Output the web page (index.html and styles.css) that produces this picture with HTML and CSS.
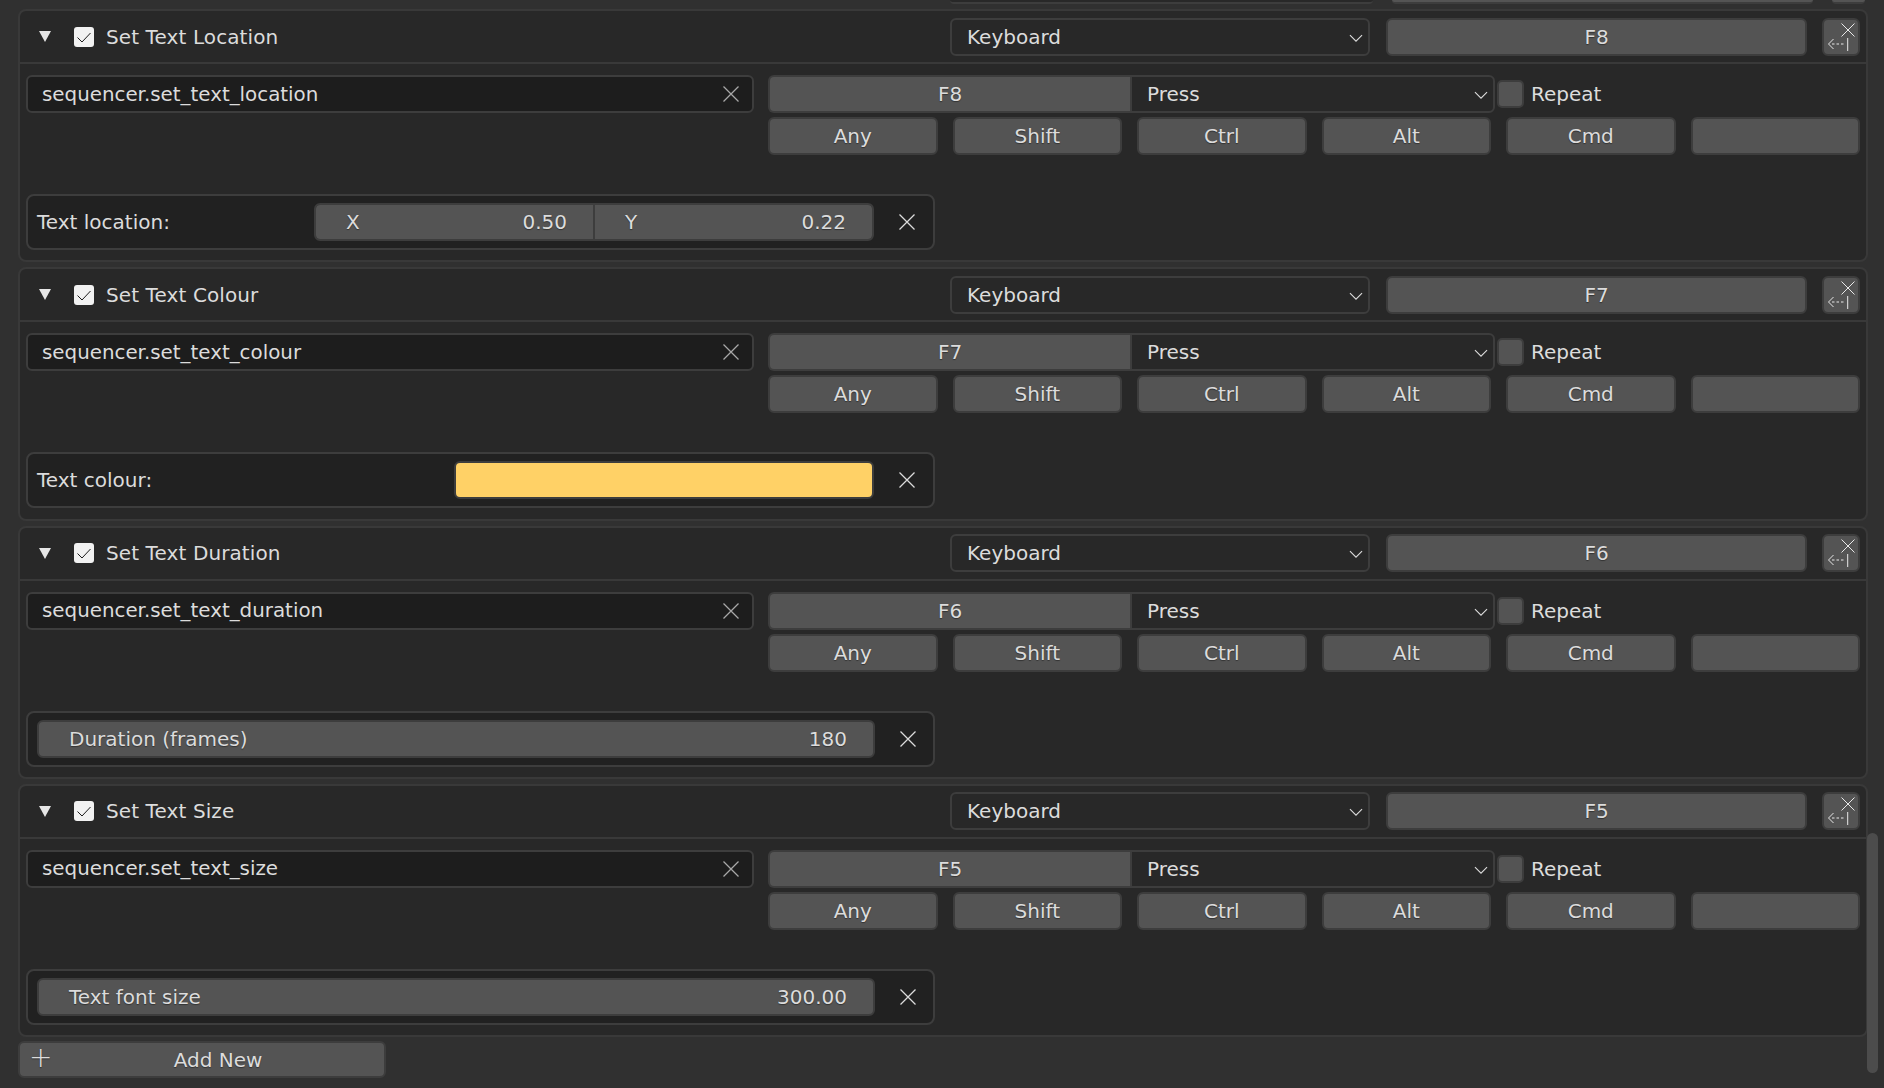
FILE: index.html
```html
<!DOCTYPE html>
<html>

<head lang="en">
    <meta charset="UTF-8">
    <title>Keymap</title>
    <link rel="stylesheet" href="styles.css">
</head>

<body>
    <svg class="icon-defs">
        <symbol id="x" viewBox="0 0 16 16"><path d="M2 2l12 12M14 2L2 14" /></symbol>
        <symbol id="chev" viewBox="0 0 14 10"><path d="M1.500 2l5.500 5.500L12.500 2" /></symbol>
        <symbol id="tick" viewBox="0 0 20 20"><path d="M3.500 10.500l4.500 4.500 8.500-9" /></symbol>
        <symbol id="restore" viewBox="0 0 38 38">
            <path class="dim" d="M11.500 21l-5 5 5 5M10 26h2.500M14.500 26h2.500M19 26h2.500M25.700 20v13" />
            <path class="bright" d="M19.500 5.500l13 13M32.500 5.500l-13 13" />
        </symbol>
    </svg>

    <div class="page">
        <div class="cut-row">
            <div class="cut cut-a"></div>
            <div class="cut cut-b"></div>
            <div class="cut cut-c"></div>
        </div>

        <section class="panel">
            <div class="panel-head">
                <span class="arrow"></span>
                <span class="check"><svg><use href="#tick" /></svg></span>
                <span class="title">Set Text Location</span>
                <div class="select head-select">Keyboard<svg class="chev"><use href="#chev" /></svg></div>
                <div class="btn head-key">F8</div>
                <div class="btn restore"><svg><use href="#restore" /></svg></div>
            </div>
            <div class="panel-body">
                <div class="body-top">
                    <div class="name-field">sequencer.set_text_location<svg class="x x-dim"><use href="#x" /></svg></div>
                    <div class="right">
                        <div class="key-row">
                            <div class="btn key-btn">F8</div>
                            <div class="select press">Press<svg class="chev"><use href="#chev" /></svg></div>
                            <span class="repeat-box"></span>
                            <span class="repeat">Repeat</span>
                        </div>
                        <div class="mods">
                            <div class="btn">Any</div>
                            <div class="btn">Shift</div>
                            <div class="btn">Ctrl</div>
                            <div class="btn">Alt</div>
                            <div class="btn">Cmd</div>
                            <div class="btn"></div>
                        </div>
                    </div>
                </div>
                <div class="params">
                    <span class="param-label">Text location:</span>
                    <div class="vector">
                        <div class="num"><span>X</span><span>0.50</span></div>
                        <div class="num"><span>Y</span><span>0.22</span></div>
                    </div>
                    <svg class="x"><use href="#x" /></svg>
                </div>
            </div>
        </section>

        <section class="panel">
            <div class="panel-head">
                <span class="arrow"></span>
                <span class="check"><svg><use href="#tick" /></svg></span>
                <span class="title">Set Text Colour</span>
                <div class="select head-select">Keyboard<svg class="chev"><use href="#chev" /></svg></div>
                <div class="btn head-key">F7</div>
                <div class="btn restore"><svg><use href="#restore" /></svg></div>
            </div>
            <div class="panel-body">
                <div class="body-top">
                    <div class="name-field">sequencer.set_text_colour<svg class="x x-dim"><use href="#x" /></svg></div>
                    <div class="right">
                        <div class="key-row">
                            <div class="btn key-btn">F7</div>
                            <div class="select press">Press<svg class="chev"><use href="#chev" /></svg></div>
                            <span class="repeat-box"></span>
                            <span class="repeat">Repeat</span>
                        </div>
                        <div class="mods">
                            <div class="btn">Any</div>
                            <div class="btn">Shift</div>
                            <div class="btn">Ctrl</div>
                            <div class="btn">Alt</div>
                            <div class="btn">Cmd</div>
                            <div class="btn"></div>
                        </div>
                    </div>
                </div>
                <div class="params">
                    <span class="param-label">Text colour:</span>
                    <div class="swatch"></div>
                    <svg class="x"><use href="#x" /></svg>
                </div>
            </div>
        </section>

        <section class="panel">
            <div class="panel-head">
                <span class="arrow"></span>
                <span class="check"><svg><use href="#tick" /></svg></span>
                <span class="title">Set Text Duration</span>
                <div class="select head-select">Keyboard<svg class="chev"><use href="#chev" /></svg></div>
                <div class="btn head-key">F6</div>
                <div class="btn restore"><svg><use href="#restore" /></svg></div>
            </div>
            <div class="panel-body">
                <div class="body-top">
                    <div class="name-field">sequencer.set_text_duration<svg class="x x-dim"><use href="#x" /></svg></div>
                    <div class="right">
                        <div class="key-row">
                            <div class="btn key-btn">F6</div>
                            <div class="select press">Press<svg class="chev"><use href="#chev" /></svg></div>
                            <span class="repeat-box"></span>
                            <span class="repeat">Repeat</span>
                        </div>
                        <div class="mods">
                            <div class="btn">Any</div>
                            <div class="btn">Shift</div>
                            <div class="btn">Ctrl</div>
                            <div class="btn">Alt</div>
                            <div class="btn">Cmd</div>
                            <div class="btn"></div>
                        </div>
                    </div>
                </div>
                <div class="params">
                    <div class="num wide"><span>Duration (frames)</span><span>180</span></div>
                    <svg class="x"><use href="#x" /></svg>
                </div>
            </div>
        </section>

        <section class="panel">
            <div class="panel-head">
                <span class="arrow"></span>
                <span class="check"><svg><use href="#tick" /></svg></span>
                <span class="title">Set Text Size</span>
                <div class="select head-select">Keyboard<svg class="chev"><use href="#chev" /></svg></div>
                <div class="btn head-key">F5</div>
                <div class="btn restore"><svg><use href="#restore" /></svg></div>
            </div>
            <div class="panel-body">
                <div class="body-top">
                    <div class="name-field">sequencer.set_text_size<svg class="x x-dim"><use href="#x" /></svg></div>
                    <div class="right">
                        <div class="key-row">
                            <div class="btn key-btn">F5</div>
                            <div class="select press">Press<svg class="chev"><use href="#chev" /></svg></div>
                            <span class="repeat-box"></span>
                            <span class="repeat">Repeat</span>
                        </div>
                        <div class="mods">
                            <div class="btn">Any</div>
                            <div class="btn">Shift</div>
                            <div class="btn">Ctrl</div>
                            <div class="btn">Alt</div>
                            <div class="btn">Cmd</div>
                            <div class="btn"></div>
                        </div>
                    </div>
                </div>
                <div class="params">
                    <div class="num wide"><span>Text font size</span><span>300.00</span></div>
                    <svg class="x"><use href="#x" /></svg>
                </div>
            </div>
        </section>

        <div class="btn add-new"><span class="plus">+</span>Add New</div>
    </div>

    <div class="scrollbar"></div>
</body>

</html>
```

FILE: styles.css
```css
* {
    box-sizing: border-box;
}

html,
body {
    margin: 0;
    height: 1088px;
    overflow: hidden;
}

body {
    background-color: #303030;
    color: #dcdcdc;
    font-family: "DejaVu Sans", sans-serif;
    font-size: 20px;
    position: relative;
}

.icon-defs {
    display: none;
}

.page {
    width: 1868px;
    padding-left: 18px;
}

svg path {
    fill: none;
    stroke: currentColor;
}

/* the bottom edge of the row scrolled off above */
.cut-row {
    height: 9px;
    display: flex;
}

.cut {
    height: 4px;
    background-color: #545454;
    border-bottom: 2px solid #3d3d3d;
    border-radius: 0 0 6px 6px;
}

.cut-a {
    margin-left: 932px;
    width: 423px;
    background-color: #282828;
}

.cut-b {
    margin-left: 19px;
    width: 421px;
}

.cut-c {
    margin-left: 19px;
    width: 33px;
}

.panel {
    height: 253.300px;
    margin-bottom: 5px;
    background-color: #282828;
    border: 2px solid #393939;
    border-radius: 8px;
    display: flex;
    flex-direction: column;
}

.panel:last-of-type {
    margin-bottom: 4px;
}

.panel-head {
    height: 53px;
    flex: none;
    display: flex;
    align-items: center;
    border-bottom: 2px solid #393939;
    padding-left: 19px;
}

.arrow {
    width: 0;
    height: 0;
    border-left: 6px solid transparent;
    border-right: 6px solid transparent;
    border-top: 11px solid #e6e6e6;
    margin-right: 23px;
}

.check {
    width: 20px;
    height: 20px;
    background-color: #f2f2f2;
    border-radius: 3px;
    color: #1c1c1c;
    margin-right: 12px;
}

.check svg {
    display: block;
    width: 20px;
    height: 20px;
}

.check path {
    stroke-width: 4;
}

.title {
    width: 844px;
    letter-spacing: 0.100px;
}

.select {
    height: 38px;
    display: flex;
    align-items: center;
    justify-content: space-between;
    padding: 0 4px 0 15px;
    background-color: #282828;
    border: 2px solid #3d3d3d;
    border-radius: 6px;
}

.chev {
    width: 16px;
    height: 11px;
    margin-top: 3px;
}

.chev path {
    stroke-width: 2.400;
}

.btn {
    height: 38px;
    display: flex;
    align-items: center;
    justify-content: center;
    background-color: #545454;
    border: 2px solid #3d3d3d;
    border-radius: 6px;
    text-shadow: 0 1px 1px rgba(0, 0, 0, 0.4);
}

.head-select {
    width: 420px;
}

.head-key {
    width: 421px;
    margin-left: 16px;
}

.restore {
    width: 38px;
    margin-left: 15px;
    color: #e8e8e8;
}

.restore svg {
    width: 38px;
    height: 38px;
    flex: none;
}

.restore path {
    stroke-width: 2.200;
}

.restore .dim {
    stroke: #b8b8b8;
}

.panel-body {
    flex: 1;
    padding: 11px 6px 0 6px;
}

.body-top {
    display: flex;
    justify-content: space-between;
}

.name-field {
    width: 728px;
    height: 38px;
    display: flex;
    align-items: center;
    justify-content: space-between;
    padding: 0 11px 0 14px;
    font-size: 19.850px;
    background-color: #1d1d1d;
    border: 2px solid #3d3d3d;
    border-radius: 6px;
}

.x {
    width: 20px;
    height: 20px;
    flex: none;
}

.x path {
    stroke-width: 1.800;
}

.x-dim {
    color: #a8a8a8;
}

.params {
    width: 909px;
    margin-top: 39px;
    height: 56px;
    display: flex;
    align-items: center;
    padding: 0 16px 0 9px;
    background-color: #212121;
    border: 2px solid #3d3d3d;
    border-radius: 8px;
}

.param-label {
    flex: 1;
}

.vector {
    width: 560px;
    height: 38px;
    margin-right: 23px;
    display: flex;
    border: 2px solid #3d3d3d;
    border-radius: 6px;
    overflow: hidden;
}

.num {
    flex: 1;
    display: flex;
    align-items: center;
    justify-content: space-between;
    padding: 0 26px 0 30px;
    background-color: #545454;
    text-shadow: 0 1px 1px rgba(0, 0, 0, 0.4);
}

.num + .num {
    border-left: 2px solid #3d3d3d;
}

.num.wide {
    flex: none;
    width: 838px;
    height: 38px;
    margin-right: 23px;
    border: 2px solid #3d3d3d;
    border-radius: 6px;
}

.swatch {
    width: 420px;
    height: 38px;
    margin-right: 23px;
    background-color: #ffd166;
    border: 2px solid #3d3d3d;
    border-radius: 6px;
}

.right {
    width: 1092px;
}

.key-row {
    display: flex;
    align-items: center;
    height: 38px;
}

.key-btn {
    width: 362px;
    border-radius: 6px 0 0 6px;
    border-right: none;
}

.press {
    width: 365px;
    border-radius: 0 6px 6px 0;
}

.repeat-box {
    width: 27px;
    height: 28px;
    margin-left: 2px;
    background-color: #545454;
    border: 2px solid #3d3d3d;
    border-radius: 5px;
}

.repeat {
    margin-left: 7px;
}

.mods {
    margin-top: 4px;
    display: grid;
    grid-template-columns: repeat(6, 1fr);
    gap: 15px;
}

.add-new {
    position: relative;
    width: 368px;
    height: 37px;
    padding-left: 32px;
}

.plus {
    position: absolute;
    left: 9px;
    top: -2px;
    font-size: 28px;
    font-weight: 300;
}

.scrollbar {
    position: absolute;
    left: 1867px;
    top: 833px;
    width: 11px;
    height: 240px;
    background-color: #4c4c4c;
    border-radius: 6px;
}
```
